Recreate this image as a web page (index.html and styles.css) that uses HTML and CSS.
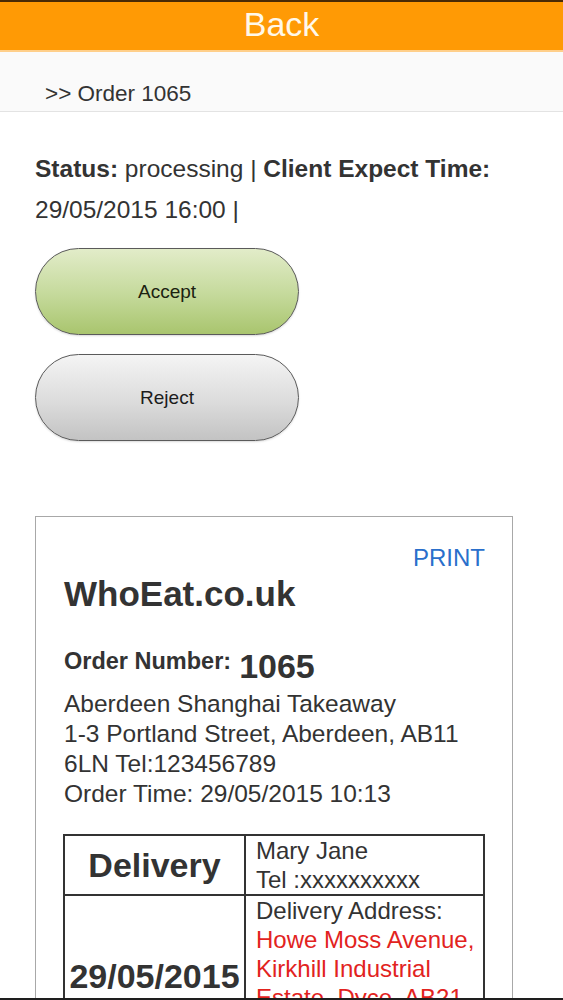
FILE: index.html
```html
<!DOCTYPE html>
<html lang="en">
<head>
<meta charset="utf-8">
<title>Order 1065</title>
<link rel="stylesheet" href="styles.css">
</head>
<body>
<header class="topbar">Back</header>
<nav class="crumb">&gt;&gt; Order 1065</nav>
<main class="content">
  <p class="status"><b>Status:</b> processing | <b>Client Expect Time:</b> 29/05/2015 16:00 |</p>
  <div class="actions">
    <button class="pill pill-accept">Accept</button>
    <button class="pill pill-reject">Reject</button>
  </div>
  <section class="receipt">
    <div class="print">PRINT</div>
    <h1 class="brand">WhoEat.co.uk</h1>
    <div class="order-no"><span class="order-label">Order Number:</span><span class="order-val">1065</span></div>
    <p class="shop">Aberdeen Shanghai Takeaway<br>1-3 Portland Street, Aberdeen, AB11 6LN Tel:123456789<br>Order Time: 29/05/2015 10:13</p>
    <table class="info">
      <tr>
        <td class="big">Delivery</td>
        <td class="detail">Mary Jane<br>Tel :xxxxxxxxxx</td>
      </tr>
      <tr>
        <td class="big">29/05/2015</td>
        <td class="detail detail-tall">Delivery Address:<br><span class="addr">Howe Moss Avenue, Kirkhill Industrial Estate, Dyce, AB21 0GU</span></td>
      </tr>
    </table>
  </section>
</main>
<div class="edge"></div>
</body>
</html>
```
FILE: styles.css
```css
html, body {
  margin: 0;
  padding: 0;
  background: #fff;
}
body {
  font-family: "Liberation Sans", Arial, sans-serif;
  color: #333;
}
.topbar {
  border-top: 2px solid #4a2a05;
  background: #ff9a05;
  height: 48px;
  border-bottom: 2px solid #ffcf8a;
  color: #fff8ea;
  font-size: 34px;
  line-height: 44px;
  text-align: center;
}
.crumb {
  background: #fafafa;
  border-bottom: 1px solid #e3e3e3;
  height: 60px;
  box-sizing: border-box;
  padding: 27px 0 0 45px;
  font-size: 22.5px;
  line-height: 30px;
  color: #333;
}
.content {
  padding: 0 35px;
}
.status {
  margin: 36px 0 0;
  font-size: 24.5px;
  line-height: 41px;
}
.actions {
  display: flex;
  flex-direction: column;
  gap: 19px;
  margin-top: 18px;
}
.pill {
  width: 264px;
  height: 87px;
  border-radius: 44px;
  border: 1.5px solid #5a5a5a;
  font-family: "Liberation Sans", Arial, sans-serif;
  font-size: 19px;
  color: #1c1c1c;
  box-shadow: 0 1px 2px rgba(0,0,0,0.15);
}
.pill-accept {
  background: linear-gradient(#e2ecc9, #c4d99a 55%, #a9c56e);
  color: #1b2210;
}
.pill-reject {
  background: linear-gradient(#f4f4f4, #dcdcdc 55%, #c3c3c3);
}
.receipt {
  margin-top: 75px;
  width: 478px;
  box-sizing: border-box;
  border: 1.5px solid #a8a8a8;
  padding: 27px 27px 40px;
}
.print {
  text-align: right;
  color: #2a6fcb;
  font-size: 24px;
  line-height: 28px;
}
.brand {
  margin: 2px 0 0 1px;
  font-size: 35px;
  line-height: 40px;
  font-weight: bold;
}
.order-no {
  display: flex;
  align-items: flex-start;
  gap: 8px;
  margin: 32px 0 0 1px;
}
.order-label {
  font-weight: bold;
  font-size: 23.5px;
  line-height: 30px;
}
.order-val {
  font-weight: bold;
  font-size: 34px;
  line-height: 40px;
}
.shop {
  margin: 3px 0 0 1px;
  font-size: 24.5px;
  line-height: 30px;
}
.info {
  margin-top: 25px;
  width: 422px;
  border-collapse: collapse;
  border: 2px solid #333;
}
.info td {
  border: 2px solid #333;
  padding: 0 8px 0 10px;
}
.big {
  width: 181px;
  box-sizing: border-box;
  text-align: center;
  font-weight: bold;
  font-size: 34px;
  padding: 0 !important;
}
.detail {
  font-size: 24px;
  line-height: 29px;
  vertical-align: top;
}
.detail-tall {
  padding-bottom: 16px !important;
}
.addr {
  color: #e2231e;
}
.edge {
  position: fixed;
  left: 0;
  right: 0;
  bottom: 0;
  height: 2px;
  background: #1e1e1e;
}
```
